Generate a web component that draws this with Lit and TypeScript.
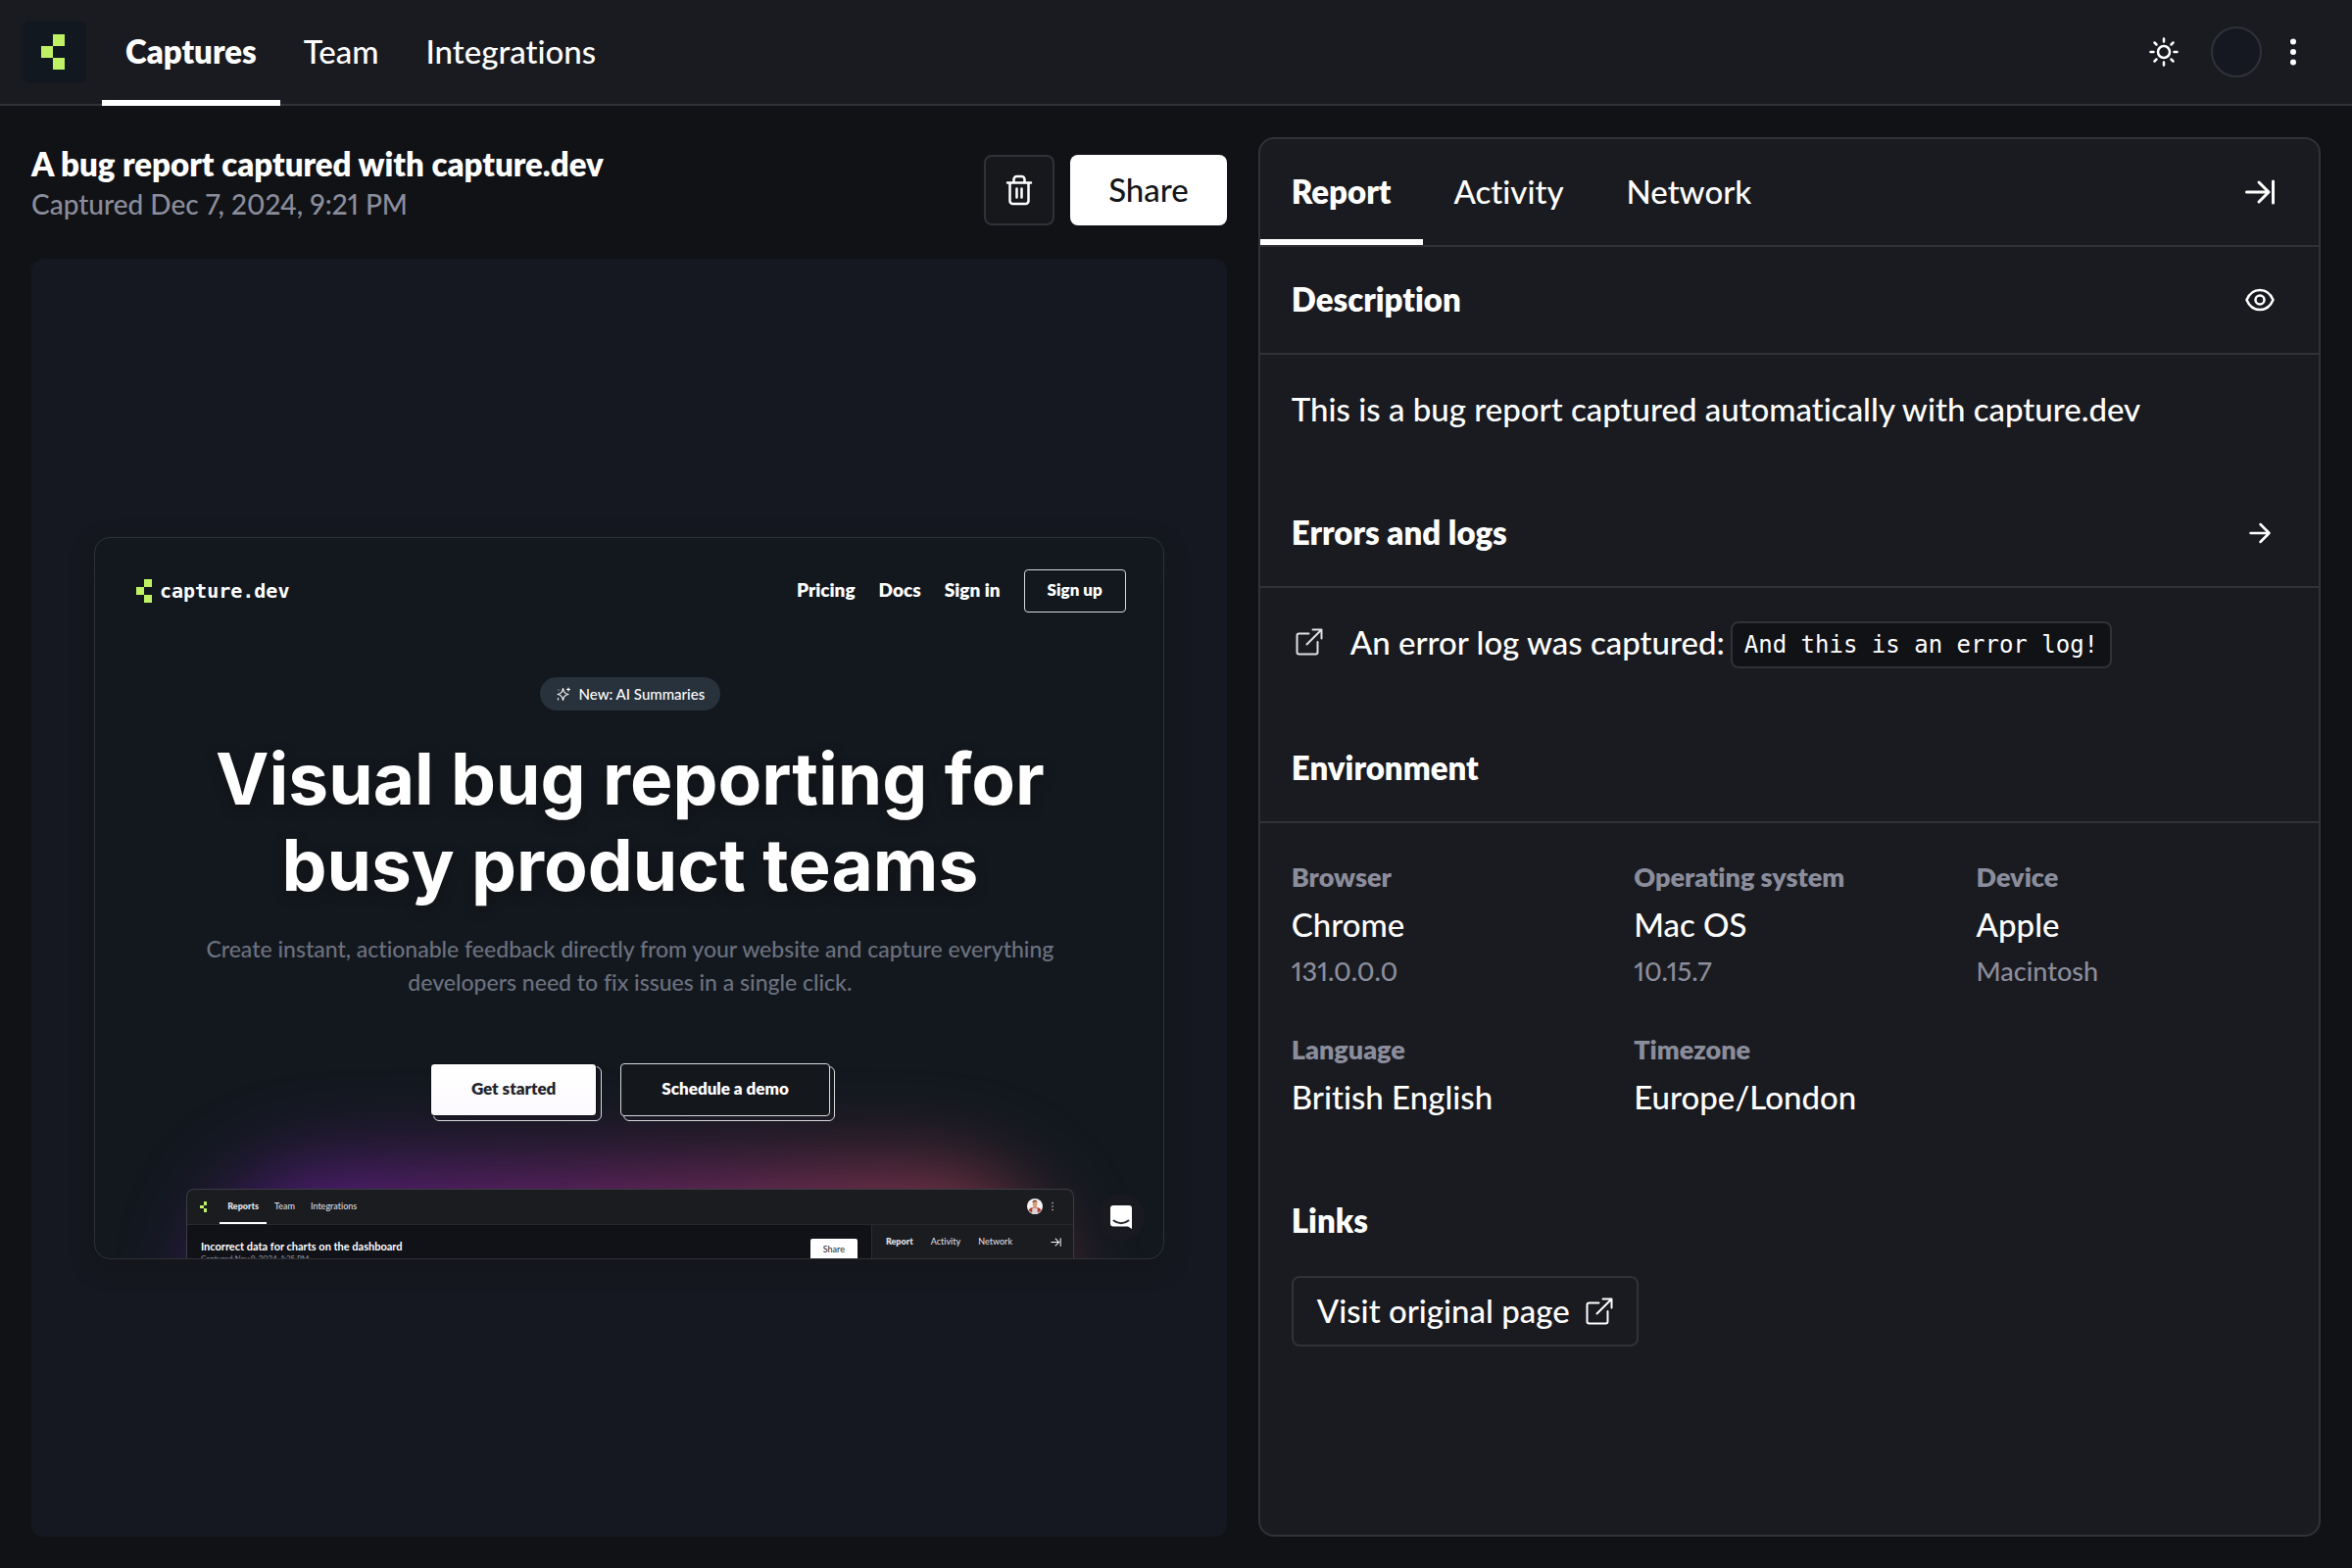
import { LitElement, html, css } from "lit";
import { customElement, state } from "lit/decorators.js";
import { classMap } from "lit/directives/class-map.js";

const shared = css`
  * {
    box-sizing: border-box;
  }
  h1,
  h2,
  h3,
  p,
  dl,
  dd,
  dt {
    margin: 0;
  }
  a {
    color: inherit;
    text-decoration: none;
  }
  button {
    font: inherit;
    color: inherit;
    background: none;
    border: 0;
    padding: 0;
    cursor: pointer;
  }
  svg {
    display: block;
    flex: none;
    fill: none;
    stroke: currentColor;
    stroke-width: 2;
    stroke-linecap: round;
    stroke-linejoin: round;
  }
  .icon-button {
    display: flex;
    align-items: center;
    justify-content: center;
    width: 56px;
    height: 56px;
  }
`;

const mark = (height: number) => html`
  <svg width=${(height * 2) / 3} height=${height} viewBox="0 0 2 3" aria-hidden="true">
    <path d="M1 0h1v1H1zM0 1h1v1H0zM1 2h1v1H1z" fill="#bef264" stroke="none" shape-rendering="crispEdges" />
  </svg>
`;

const externalIcon = html`
  <svg width="28" height="28" viewBox="0 0 28 28" aria-hidden="true">
    <path d="M13.5 5.5H3.5a2 2 0 0 0-2 2v17a2 2 0 0 0 2 2h17a2 2 0 0 0 2-2V14M17.5 1.5h9v9M11.5 16.5l15-15" />
  </svg>
`;

const collapseIcon = (size: number, stroke: number) => html`
  <svg width=${size} height=${size} viewBox="0 0 32 32" aria-hidden="true">
    <path stroke-width=${stroke} d="M2.5 16H25M15 6l10 10-10 10M29.5 5v22" />
  </svg>
`;

@customElement("top-bar")
class TopBar extends LitElement {
  static styles = [
    shared,
    css`
      :host {
        display: block;
      }
      .bar {
        display: flex;
        align-items: center;
        height: 108px;
        padding: 0 32px 0 24px;
        background: #1a1b20;
        border-bottom: 2px solid #303238;
      }
      .logo {
        display: flex;
        align-items: center;
        justify-content: center;
        width: 64px;
        height: 64px;
        margin-right: 16px;
        padding-right: 4px;
        border-radius: 6px;
        background: #12181f;
      }
      .tabs {
        display: flex;
        align-self: stretch;
        flex: 1;
        margin-bottom: -2px;
      }
      .tab {
        display: flex;
        align-items: center;
        padding: 0 24px;
        border-bottom: 6px solid transparent;
        border-top: 4px solid transparent;
      }
      .tab.active {
        font-weight: 800;
        border-bottom-color: #fff;
      }
      .avatar {
        width: 52px;
        height: 52px;
        margin: 0 4px 0 20px;
        border: 2px solid #303238;
        border-radius: 50%;
        background: #151821;
      }
    `,
  ];

  render() {
    return html`
      <header class="bar">
        <a class="logo" href="#home" aria-label="Home">${mark(36)}</a>
        <nav class="tabs">
          <a class="tab active" href="#captures" aria-current="page">Captures</a>
          <a class="tab" href="#team">Team</a>
          <a class="tab" href="#integrations">Integrations</a>
        </nav>
        <button class="icon-button" aria-label="Toggle theme">
          <svg width="32" height="32" viewBox="0 0 32 32">
            <circle cx="16" cy="16" r="6" stroke-width="2.5" />
            <path
              stroke-width="2.5"
              d="M16 2.5v3M16 26.5v3M2.5 16h3M26.5 16h3M6.5 6.5l2 2M23.5 23.5l2 2M6.5 25.5l2-2M23.5 8.5l2-2"
            />
          </svg>
        </button>
        <button class="avatar" aria-label="Account"></button>
        <button class="icon-button" aria-label="More">
          <svg width="8" height="30" viewBox="0 0 8 30">
            <path d="M4 4.5h0M4 15h0M4 25.5h0" stroke-width="6" />
          </svg>
        </button>
      </header>
    `;
  }
}

@customElement("page-snapshot")
class PageSnapshot extends LitElement {
  static styles = [
    shared,
    css`
      :host {
        display: block;
      }
      .page {
        position: relative;
        overflow: hidden;
        padding-left: 2px;
        border: 1px solid #2f3237;
        border-radius: 16px;
        background: #13181f;
        box-shadow: 0 8px 24px rgba(20, 20, 20, 0.4);
      }
      .site-nav {
        display: flex;
        align-items: center;
        gap: 24px;
        padding: 32px 38px 0 40px;
        font-size: 19px;
        font-weight: 800;
      }
      .brand {
        display: flex;
        align-items: center;
        gap: 8px;
        margin-right: auto;
        font-family: "DejaVu Sans Mono", monospace;
        font-size: 20px;
      }
      .sign-up {
        height: 44px;
        padding: 0 23px;
        border: 1px solid #d6d8da;
        border-radius: 4px;
        font-size: 17px;
        font-weight: 800;
      }
      .hero {
        position: relative;
        z-index: 1;
        display: flex;
        flex-direction: column;
        align-items: center;
        text-align: center;
      }
      .pill {
        display: flex;
        align-items: center;
        gap: 8px;
        height: 34px;
        margin-top: 66px;
        padding: 0 16px;
        border-radius: 17px;
        background: #28323c;
        font-size: 15px;
      }
      .headline {
        max-width: 900px;
        margin-top: 26px;
        font-family: Inter, sans-serif;
        font-size: 73px;
        line-height: 88px;
        font-weight: 700;
        text-shadow: 0 4px 12px rgba(18, 18, 18, 0.9);
      }
      .lede {
        max-width: 900px;
        margin-top: 24px;
        font-size: 23px;
        line-height: 34px;
        color: #6c717e;
      }
      .actions {
        display: flex;
        gap: 24px;
        margin-top: 66px;
      }
      .cta {
        position: relative;
        height: 54px;
        padding: 0 41px;
        border: 1px solid #d6d8da;
        border-radius: 4px;
        background: #14181d;
        font-size: 17px;
        font-weight: 800;
      }
      .cta.primary {
        background: linear-gradient(#fff, #fdfaff);
        border-color: #0c0e12;
        color: #24242a;
      }
      .stack {
        position: relative;
        isolation: isolate;
      }
      .stack::before {
        content: "";
        position: absolute;
        z-index: -1;
        inset: 3px -5px -5px 3px;
        border: 1px solid #d6d8da;
        border-radius: 6px;
      }
      .glow {
        position: absolute;
        z-index: 0;
        left: 11%;
        right: 11%;
        bottom: -200px;
        height: 288px;
        border-radius: 120px;
        background: linear-gradient(90deg, #551b8c, #74266c 50%, #923e46);
        filter: blur(44px);
      }
      .app {
        position: relative;
        z-index: 1;
        max-width: 906px;
        height: 71px;
        margin: 74px auto 0;
        overflow: hidden;
        border: 1px solid #3a3c42;
        border-bottom: 0;
        border-radius: 8px 8px 0 0;
        background: #1b1c20;
        font-size: 9px;
        color: #dcdde0;
      }
      .app-bar {
        display: flex;
        align-items: center;
        height: 36px;
        padding: 0 17px 0 13px;
        border-bottom: 1px solid #26282d;
      }
      .app-tabs {
        display: flex;
        align-self: stretch;
        flex: 1;
        margin-left: 13px;
      }
      .app-tab {
        display: flex;
        align-items: center;
        padding: 0 8px;
        border-top: 2px solid transparent;
        border-bottom: 2px solid transparent;
      }
      .app-tab.active {
        font-weight: 800;
        border-bottom-color: #fff;
      }
      .app-body {
        display: flex;
        align-items: flex-start;
      }
      .app-main {
        display: flex;
        flex: 1;
        justify-content: space-between;
        height: 60px;
        padding: 14px 14px 0 14px;
        background: #111218;
      }
      .app-title {
        font-size: 11px;
        line-height: 15px;
        font-weight: 700;
        color: #fff;
      }
      .app-date {
        font-size: 8px;
        line-height: 10px;
        text-align: left;
        color: #8a8c9b;
      }
      .app-share {
        width: 48px;
        height: 24px;
        border-radius: 2px;
        background: #fff;
        color: #333;
      }
      .app-side {
        display: flex;
        align-items: center;
        width: 206px;
        height: 36px;
        padding: 0 12px 0 5px;
        border-left: 1px solid #2c2e34;
      }
      .app-side .app-tab {
        height: 36px;
        padding: 0 9px;
      }
      .app-side .push {
        margin-left: auto;
      }
      .app-side svg {
        color: #fff;
      }
      .chat {
        position: absolute;
        z-index: 2;
        right: 19px;
        bottom: 18px;
        display: flex;
        align-items: center;
        justify-content: center;
        width: 48px;
        height: 48px;
        border-radius: 50%;
        background: #191a1f;
      }
    `,
  ];

  render() {
    return html`
      <article class="page">
        <nav class="site-nav">
          <a class="brand" href="#site">${mark(24)}capture.dev</a>
          <a href="#pricing">Pricing</a>
          <a href="#docs">Docs</a>
          <a href="#sign-in">Sign in</a>
          <button class="sign-up">Sign up</button>
        </nav>
        <div class="glow"></div>
        <div class="hero">
          <div class="pill">
            <svg width="16" height="16" viewBox="0 0 16 16">
              <path
                stroke-width="1.2"
                d="M7.5 2.5C8 6.5 9.500 8 13 8.500 9.500 9 8 10.500 7.500 14.500 7 10.500 5.500 9 2 8.500 5.500 8 7 6.500 7.500 2.500z"
              />
              <path stroke-width="1.2" d="M13 2v3M11.500 3.500h3M2.500 12.500v1.500M3 4h0" />
            </svg>
            New: AI Summaries
          </div>
          <h1 class="headline">Visual bug reporting for busy product teams</h1>
          <p class="lede">
            Create instant, actionable feedback directly from your website and capture everything developers need to
            fix issues in a single click.
          </p>
          <div class="actions">
            <div class="stack"><button class="cta primary">Get started</button></div>
            <div class="stack"><button class="cta">Schedule a demo</button></div>
          </div>
        </div>
        <div class="app">
          <div class="app-bar">
            ${mark(11)}
            <div class="app-tabs">
              <a class="app-tab active" href="#reports">Reports</a>
              <a class="app-tab" href="#app-team">Team</a>
              <a class="app-tab" href="#app-integrations">Integrations</a>
            </div>
            <svg width="30" height="16" viewBox="0 0 30 16">
              <g stroke="none">
                <circle cx="8" cy="8" r="8" fill="#f5f3f2" />
                <path d="M1.600 12c1-2.500 3-2.700 4.400-3h4c1.500.3 3.500.5 4.400 3A8 8 0 0 1 1.600 12z" fill="#b23a34" />
                <path d="M5.500 9.500h5l.5 6a8 8 0 0 1-6 0z" fill="#d9d4d6" />
                <path d="M5.800 3.500a2.300 2.300 0 0 1 4.500 0v3L9.500 9.500h-3l-.7-3z" fill="#dc9a7c" />
                <path d="M5.500 4c0-3.500 5-3.500 5 0L9 2.800z" fill="#6b4030" />
              </g>
              <path d="M26 4.500h0M26 8h0M26 11.500h0" stroke-width="1.500" />
            </svg>
          </div>
          <div class="app-body">
            <div class="app-main">
              <div>
                <h2 class="app-title">Incorrect data for charts on the dashboard</h2>
                <p class="app-date">Captured Nov 9, 2024, 1:35 PM</p>
              </div>
              <button class="app-share">Share</button>
            </div>
            <div class="app-side">
              <a class="app-tab active" href="#app-report">Report</a>
              <a class="app-tab" href="#app-activity">Activity</a>
              <a class="app-tab" href="#app-network">Network</a>
              <span class="push">${collapseIcon(11, 3)}</span>
            </div>
          </div>
        </div>
        <button class="chat" aria-label="Open chat">
          <svg width="24" height="26" viewBox="0 0 24 26">
            <path d="M4 1h16a3 3 0 0 1 3 3v21l-4-2.500H4a3 3 0 0 1-3-3V4a3 3 0 0 1 3-3z" fill="#fff" stroke="none" />
            <path d="M4.500 16.500c4.500 3.600 10.500 3.600 15 0" stroke="#2a2b30" />
          </svg>
        </button>
      </article>
    `;
  }
}

@customElement("capture-view")
class CaptureView extends LitElement {
  static styles = [
    shared,
    css`
      :host {
        display: flex;
        flex-direction: column;
      }
      .head {
        display: flex;
        align-items: flex-end;
        gap: 16px;
        padding: 6px 0 34px;
      }
      .titles {
        flex: 1;
      }
      .title {
        font-size: 33px;
        line-height: 42px;
        font-weight: 800;
      }
      .date {
        font-size: 28px;
        line-height: 40px;
        padding-bottom: 2px;
        color: #8b8d9c;
      }
      .action {
        display: flex;
        align-items: center;
        justify-content: center;
        height: 72px;
        border-radius: 8px;
      }
      .delete {
        width: 72px;
        border: 2px solid #303238;
        background: #17181c;
      }
      .share {
        padding: 0 39px;
        background: #fff;
        color: #15161a;
      }
      .stage {
        display: grid;
        align-items: center;
        flex: 1;
        padding: 64px;
        border-radius: 12px;
        background: #151820;
      }
    `,
  ];

  render() {
    return html`
      <div class="head">
        <div class="titles">
          <h1 class="title">A bug report captured with capture.dev</h1>
          <p class="date">Captured Dec 7, 2024, 9:21 PM</p>
        </div>
        <button class="action delete" aria-label="Delete capture">
          <svg width="28" height="32" viewBox="0 0 28 32">
            <path
              stroke-width="2.5"
              d="M2 8.500h24M8.500 8V5a3 3 0 0 1 3-3h5a3 3 0 0 1 3 3v3M4.500 8.500V27a3 3 0 0 0 3 3h13a3 3 0 0 0 3-3V8.500M11.500 14.500v9M16.500 14.500v9"
            />
          </svg>
        </button>
        <button class="action share">Share</button>
      </div>
      <div class="stage"><page-snapshot></page-snapshot></div>
    `;
  }
}

const environment = [
  { label: "Browser", value: "Chrome", detail: "131.0.0.0" },
  { label: "Operating system", value: "Mac OS", detail: "10.15.7" },
  { label: "Device", value: "Apple", detail: "Macintosh" },
  { label: "Language", value: "British English", detail: "" },
  { label: "Timezone", value: "Europe/London", detail: "" },
];

@customElement("report-panel")
class ReportPanel extends LitElement {
  static styles = [
    shared,
    css`
      :host {
        display: block;
        overflow: hidden;
        border: 2px solid #303238;
        border-radius: 16px;
        background: #1a1b20;
      }
      .tabs {
        display: flex;
        align-items: center;
        height: 110px;
        padding-right: 32px;
        border-bottom: 2px solid #303238;
      }
      .tab {
        align-self: stretch;
        padding: 0 32px;
        border-top: 6px solid transparent;
        border-bottom: 6px solid transparent;
      }
      .tab.active {
        font-weight: 800;
        border-bottom-color: #fff;
      }
      .spacer {
        flex: 1;
      }
      .section-head {
        display: flex;
        align-items: center;
        justify-content: space-between;
        height: 110px;
        padding: 0 32px;
        border-bottom: 2px solid #303238;
      }
      .section-head.plain {
        border-bottom-color: transparent;
      }
      .section-title {
        font-size: 33px;
        line-height: 48px;
        padding-bottom: 2px;
        font-weight: 800;
      }
      .section-body {
        padding: 31px 32px 49px;
      }
      .text {
        line-height: 48px;
      }
      .log {
        display: flex;
        align-items: flex-start;
        min-height: 50px;
      }
      .log-link {
        padding: 10px 28px 0 4px;
        color: #dfe0e4;
      }
      .code {
        margin: 3px 0 -1px 6px;
        padding: 0 12px;
        border: 2px solid #303238;
        border-radius: 8px;
        background: #111216;
        font-family: "DejaVu Sans Mono", monospace;
        font-size: 24px;
        line-height: 44px;
      }
      .facts {
        display: grid;
        grid-template-columns: repeat(3, minmax(0, 1fr));
        gap: 32px;
        line-height: 48px;
      }
      .label {
        font-size: 27px;
        font-weight: 800;
        color: #8b8d9c;
      }
      .detail {
        font-size: 27px;
        color: #8b8d9c;
      }
      .links {
        padding: 0 32px 32px;
      }
      .visit {
        display: inline-flex;
        align-items: center;
        gap: 16px;
        height: 72px;
        padding: 0 24px;
        border: 2px solid #303238;
        border-radius: 8px;
      }
    `,
  ];

  @state() private active = "Report";

  render() {
    return html`
      <div class="tabs" role="tablist">
        ${["Report", "Activity", "Network"].map(
          (name) => html`
            <button
              role="tab"
              class=${classMap({ tab: true, active: name === this.active })}
              aria-selected=${name === this.active}
              @click=${() => (this.active = name)}
            >
              ${name}
            </button>
          `,
        )}
        <span class="spacer"></span>
        <button class="icon-button" aria-label="Collapse panel">${collapseIcon(32, 3)}</button>
      </div>

      <div class="section-head">
        <h2 class="section-title">Description</h2>
        <button class="icon-button" aria-label="Preview description">
          <svg width="32" height="32" viewBox="0 0 32 32">
            <path
              stroke-width="2.5"
              d="M2.500 16C5 10 10 6 16 6S27 10 29.500 16C27 22 22 26 16 26S5 22 2.500 16z"
            />
            <circle cx="16" cy="16" r="4.500" stroke-width="2.500" />
          </svg>
        </button>
      </div>
      <div class="section-body">
        <p class="text">This is a bug report captured automatically with capture.dev</p>
      </div>

      <div class="section-head">
        <h2 class="section-title">Errors and logs</h2>
        <button class="icon-button" aria-label="Open logs">
          <svg width="32" height="32" viewBox="0 0 32 32">
            <path stroke-width="2.500" d="M6.500 16h19M16.500 7l9 9-9 9" />
          </svg>
        </button>
      </div>
      <div class="section-body">
        <div class="log">
          <a class="log-link" href="#log" aria-label="Open error log">${externalIcon}</a>
          <span class="text">An error log was captured:</span>
          <code class="code">And this is an error log!</code>
        </div>
      </div>

      <div class="section-head">
        <h2 class="section-title">Environment</h2>
      </div>
      <div class="section-body">
        <dl class="facts">
          ${environment.map(
            (fact) => html`
              <div>
                <dt class="label">${fact.label}</dt>
                <dd>${fact.value}</dd>
                ${fact.detail ? html`<dd class="detail">${fact.detail}</dd>` : null}
              </div>
            `,
          )}
        </dl>
      </div>

      <div class="section-head plain">
        <h2 class="section-title">Links</h2>
      </div>
      <div class="links">
        <a class="visit" href="#original">Visit original page ${externalIcon}</a>
      </div>
    `;
  }
}

@customElement("app-root")
class AppRoot extends LitElement {
  static styles = [
    shared,
    css`
      :host {
        display: flex;
        flex-direction: column;
        min-height: 100vh;
        background: #111216;
        color: #fff;
        font-family: Lato, "Open Sans", sans-serif;
        font-size: 33px;
        line-height: 1.2;
        font-weight: 500;
        font-variant-ligatures: none;
        font-variant-numeric: proportional-nums;
      }
      .columns {
        display: grid;
        flex: 1;
        grid-template-columns: minmax(0, 9fr) minmax(0, 8fr);
        gap: 32px;
        padding: 32px;
      }
    `,
  ];

  render() {
    return html`
      <top-bar></top-bar>
      <main class="columns">
        <capture-view></capture-view>
        <report-panel></report-panel>
      </main>
    `;
  }
}
